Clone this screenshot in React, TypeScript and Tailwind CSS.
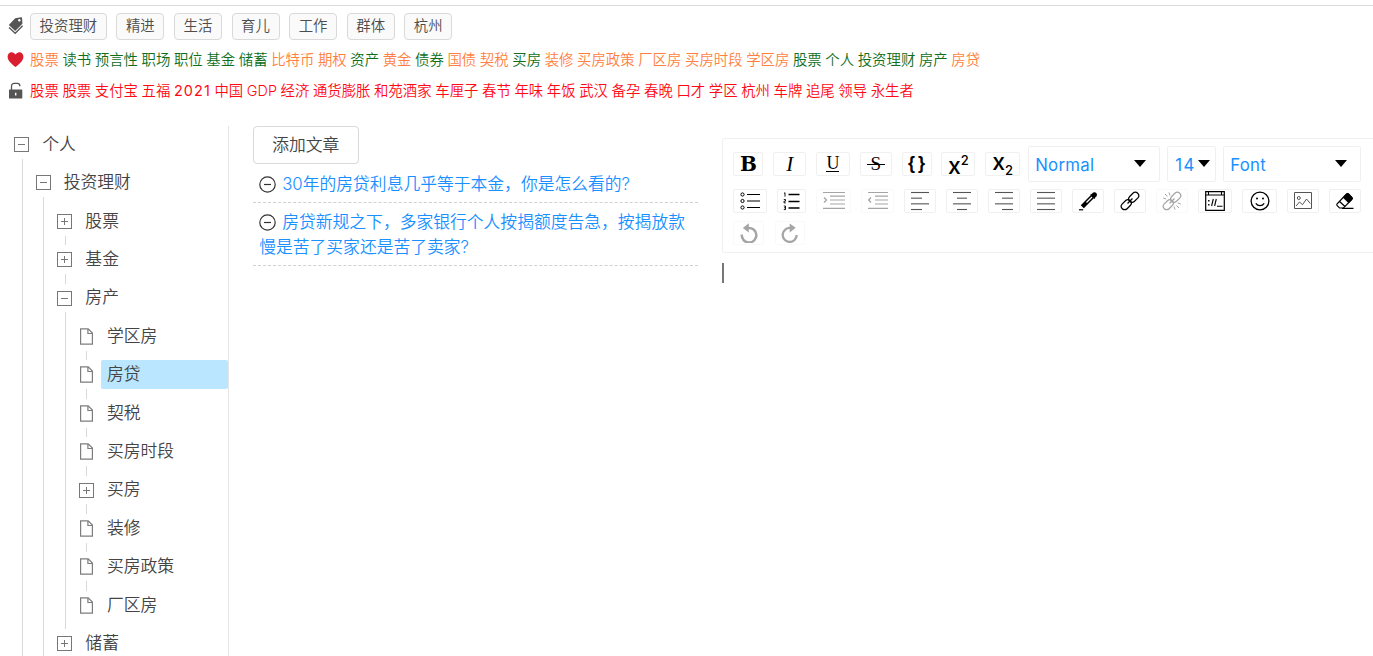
import type { ReactNode } from "react";

const categories = ["投资理财", "精进", "生活", "育儿", "工作", "群体", "杭州"];

// A leading "*" marks an orange keyword; the rest are green.
const favorites =
  "*股票 读书 预言性 职场 职位 基金 储蓄 *比特币 *期权 资产 *黄金 债券 *国债 *契税 买房 *装修 *买房政策 *厂区房 *买房时段 *学区房 股票 个人 投资理财 房产 *房贷".split(" ");

const hotWords =
  "股票 股票 支付宝 五福 2021 中国 GDP 经济 通货膨胀 和苑酒家 车厘子 春节 年味 年饭 武汉 备孕 春晚 口才 学区 杭州 车牌 追尾 领导 永生者".split(" ");

type Kind = "open" | "closed" | "leaf";
type Node = { label: string; level: number; kind: Kind; first?: boolean; last?: boolean; selected?: boolean };

const nodes: Node[] = [
  { label: "个人", level: 0, kind: "open", first: true },
  { label: "投资理财", level: 1, kind: "open", first: true },
  { label: "股票", level: 2, kind: "closed", first: true },
  { label: "基金", level: 2, kind: "closed" },
  { label: "房产", level: 2, kind: "open" },
  { label: "学区房", level: 3, kind: "leaf", first: true },
  { label: "房贷", level: 3, kind: "leaf", selected: true },
  { label: "契税", level: 3, kind: "leaf" },
  { label: "买房时段", level: 3, kind: "leaf" },
  { label: "买房", level: 3, kind: "closed" },
  { label: "装修", level: 3, kind: "leaf" },
  { label: "买房政策", level: 3, kind: "leaf" },
  { label: "厂区房", level: 3, kind: "leaf", last: true },
  { label: "储蓄", level: 2, kind: "closed" },
];

const articles = [
  "30年的房贷利息几乎等于本金，你是怎么看的?",
  "房贷新规之下，多家银行个人按揭额度告急，按揭放款慢是苦了买家还是苦了卖家?",
];

function NodeIcon({ kind }: { kind: Kind }) {
  if (kind === "leaf") {
    return (
      <svg className="block" width="15" height="17" viewBox="0 0 15 17" fill="none" stroke="#7d7d7d" strokeWidth="1.2">
        <path d="M1.6 .9h7.6l4.2 4.2v11H1.6zM8.9 .9v4.6h4.5" />
      </svg>
    );
  }
  return (
    <svg className="block" width="15" height="15" viewBox="0 0 15 15" fill="none" stroke="#777" strokeWidth="1">
      <rect x=".5" y=".5" width="14" height="14" />
      <path d={kind === "open" ? "M4 7.5h7" : "M4 7.5h7M7.5 4v7"} />
    </svg>
  );
}

function TreeRow({ node }: { node: Node }) {
  return (
    <li className="flex h-[38.4px]">
      {Array.from({ length: node.level }, (_, i) => (
        <span key={i} className="flex w-[21.6px] shrink-0 justify-center pl-[1px]">
          <span className="h-full w-px bg-[#d9d9d9]" />
        </span>
      ))}
      <span className="flex w-[21.6px] shrink-0 flex-col items-center justify-between">
        <span className={node.first ? "h-[4.8px] w-px" : "ml-[1px] h-[4.8px] w-px bg-[#d9d9d9]"} />
        <NodeIcon kind={node.kind} />
        <span className={node.last ? "h-[4.8px] w-px" : "ml-[1px] h-[4.8px] w-px bg-[#d9d9d9]"} />
      </span>
      <span
        className={`my-[4.8px] ml-[3.6px] flex flex-1 items-center rounded-[2px] pl-[6.2px] ${node.selected ? "bg-[#bae7ff]" : ""}`}
      >
        {node.label}
      </span>
    </li>
  );
}

function Lines({ rows, color = "#555" }: { rows: [number, number][]; color?: string }) {
  return (
    <>
      {rows.map(([x, w], i) => (
        <path key={i} d={`M${x} ${1.5 + i * 5.67}h${w}`} stroke={color} strokeWidth="1.1" />
      ))}
    </>
  );
}

function Tool({ width, disabled, children }: { width: string; disabled?: boolean; children: ReactNode }) {
  return (
    <button
      className={`flex h-6 shrink-0 items-center justify-center rounded-[2px] border border-[#f0f0f0] bg-white text-black ${width} ${disabled ? "opacity-35" : ""}`}
    >
      {children}
    </button>
  );
}

function Glyph({ children, w = 20 }: { children: ReactNode; w?: number }) {
  return (
    <svg width={w} height="20" viewBox={`0 0 ${w} 20`} fill="none" stroke="#000" className="block shrink-0">
      {children}
    </svg>
  );
}

function Arrow() {
  return (
    <svg width="12" height="7" viewBox="0 0 12 7" className="mb-[3px] block shrink-0">
      <path d="M0 0h12L6 7z" fill="#000" />
    </svg>
  );
}

function LinkShape() {
  return (
    <g transform="rotate(-45 10 10)" strokeWidth="1.2">
      <rect x="-.9" y="6.6" width="11.3" height="6.8" rx="3.4" />
      <rect x="9.6" y="6.6" width="11.3" height="6.8" rx="3.4" />
      <path d="M6.5 10h7" />
    </g>
  );
}

function Toolbar() {
  return (
    <div className="h-[115px] w-[660px] rounded-[2px] border border-[#f0f0f0] pl-[10.4px] pt-[7px]">
      <div className="flex h-9 items-center">
        <div className="flex gap-[9.8px] text-[21px] leading-none">
          <Tool width="w-[30px]">
            <span className="font-['DejaVu_Serif'] text-[20px] font-bold">B</span>
          </Tool>
          <Tool width="w-[33px]">
            <span className="font-['Liberation_Serif'] text-[21px] italic">I</span>
          </Tool>
          <Tool width="w-[34px]">
            <span className="border-b border-black font-['Liberation_Serif'] text-[18px] leading-[15px]">U</span>
          </Tool>
          <Tool width="w-[32px]">
            <span className="relative flex w-[18px] justify-center font-['Liberation_Serif'] text-[19px] leading-[20px]">
              S
              <span className="absolute left-0 top-[10px] h-px w-full bg-black" />
            </span>
          </Tool>
          <Tool width="w-[30px]">
            <span className="pb-[2px] pl-[3px] font-['Liberation_Sans'] text-[18px] font-bold tracking-[3px]">{"{}"}</span>
          </Tool>
          <Tool width="w-[34px]">
            <span className="flex items-start font-['Inter'] font-medium">
              <span className="pt-[3px] text-[23px] leading-[16px]">x</span>
              <span className="text-[13px] leading-[10px]">2</span>
            </span>
          </Tool>
          <Tool width="w-[35px]">
            <span className="flex items-end font-['Inter'] font-medium">
              <span className="pb-[5px] text-[23px] leading-[18px]">x</span>
              <span className="text-[13px] leading-[11px]">2</span>
            </span>
          </Tool>
        </div>
        <div className="ml-[8px] flex h-9 w-[132px] items-center justify-between rounded-[2px] border border-[#f0f0f0] pl-[6px] pr-[13px] pt-[1px] text-[16.8px] font-normal tracking-[0.3px] text-[#1890ff]">
          <span className="pt-[3px]">Normal</span>
          <Arrow />
        </div>
        <div className="ml-[7px] flex h-9 w-[49px] items-center justify-between rounded-[2px] border border-[#f0f0f0] pl-[7px] pr-[5px] pt-[1px] text-[16.8px] font-normal tracking-[1.5px] text-[#1890ff]">
          <span className="pt-[3px]">14</span>
          <Arrow />
        </div>
        <div className="ml-[7px] flex h-9 w-[138px] items-center justify-between rounded-[2px] border border-[#f0f0f0] pl-[6px] pr-[13px] pt-[1px] text-[16.8px] font-normal tracking-[0.3px] text-[#1890ff]">
          <span className="pt-[3px]">Font</span>
          <Arrow />
        </div>
      </div>

      <div className="mt-[7px] flex gap-[10px]">
        <Tool width="w-[34px]">
          <Glyph>
            <path d="M7 3.5h13M7 10h13M7 16.5h13" strokeWidth="1.2" />
            <circle cx="2.5" cy="3.5" r="1.6" />
            <circle cx="2.5" cy="10" r="1.6" />
            <circle cx="2.5" cy="16.5" r="1.6" />
          </Glyph>
        </Tool>
        <Tool width="w-[29px]">
          <Glyph w={17}>
            <path d="M5.5 3.5h11M5.5 10.5h11M5.5 17h11" strokeWidth="1.5" />
            <path d="M1 2.5l1-.8v4M.8 8.5h1.7v1.7H1v1.7h1.8M.8 15h1.7v3.6H.8M1 16.8h1.5" strokeWidth=".9" />
          </Glyph>
        </Tool>
        <Tool width="w-[35px]" disabled>
          <Glyph w={22}>
            <path d="M0 1.5h22M7 5.2h15M7 9h15M7 13h15M0 17.3h22" strokeWidth="1.2" />
            <path d="M1 6.5L3.5 9 1 11.5" strokeWidth="1.3" />
          </Glyph>
        </Tool>
        <Tool width="w-[33px]" disabled>
          <Glyph>
            <path d="M0 1.5h20M7 5.2h13M7 9h13M7 13h13M0 17.3h20" strokeWidth="1.2" />
            <path d="M3 6.5L.7 9 3 11.5" strokeWidth="1.3" />
          </Glyph>
        </Tool>
        <Tool width="w-[32px]">
          <Glyph w={18}><Lines rows={[[0, 18], [0, 11], [0, 18], [0, 11]]} /></Glyph>
        </Tool>
        <Tool width="w-[32px]">
          <Glyph w={18}><Lines rows={[[0, 18], [4, 10], [0, 18], [4, 10]]} /></Glyph>
        </Tool>
        <Tool width="w-[32px]">
          <Glyph w={18}><Lines rows={[[0, 18], [7, 11], [0, 18], [7, 11]]} /></Glyph>
        </Tool>
        <Tool width="w-[32px]">
          <Glyph w={18}><Lines rows={[[0, 18], [0, 18], [0, 18], [0, 18]]} /></Glyph>
        </Tool>
        <Tool width="w-[32px]">
          <Glyph>
            <path d="M4.3 15.7L14.5 5.5" strokeWidth="4.4" />
            <path d="M8.5 11.5L14 6" stroke="#fff" strokeWidth="1.3" />
            <path d="M12.8 3.2l4.2 4.2" strokeWidth="1.6" />
            <circle cx="16.4" cy="3.8" r="2.5" fill="#000" stroke="none" />
            <path d="M1 18.8h4.2" strokeWidth="1.2" />
          </Glyph>
        </Tool>
        <Tool width="w-[32px]">
          <Glyph><LinkShape /></Glyph>
        </Tool>
        <Tool width="w-[32px]" disabled>
          <Glyph>
            <LinkShape />
            <path d="M7 1.5l1 3M3 3l2.5 2.5M1.2 7l3 1M13 18.5l-1-3M17 17l-2.5-2.5M18.8 13l-3-1" />
          </Glyph>
        </Tool>
        <Tool width="w-[34px]">
          <Glyph>
            <path d="M.7 .7h18.6v18.6H.7zM.7 4h18.6" strokeWidth="1.2" />
            <path d="M3.5 .7V4M16.5 .7V4M8.3 8L6.6 15M11.3 8L9.6 15M12 15.2h5.5" strokeWidth="1.1" />
            <path d="M3.8 9v1.6M3.8 13v1.6" strokeWidth="1.4" />
          </Glyph>
        </Tool>
        <Tool width="w-[35px]">
          <Glyph>
            <circle cx="10" cy="10" r="8.9" strokeWidth="1.3" />
            <path d="M5.8 12.3c2 3 6.4 3 8.4 0" strokeWidth="1.2" />
            <circle cx="7" cy="7.4" r="1" fill="#000" stroke="none" />
            <circle cx="13" cy="7.4" r="1" fill="#000" stroke="none" />
          </Glyph>
        </Tool>
        <Tool width="w-[32px]">
          <Glyph w={18}>
            <g stroke="#555">
              <path d="M.5 1.5h17v16H.5z" />
              <circle cx="4.8" cy="7" r="1.5" />
              <path d="M2 15l3.5-4 3 2.7L12.5 8l3.8 4.5" />
            </g>
          </Glyph>
        </Tool>
        <Tool width="w-[32px]">
          <Glyph>
            <path d="M2 13L11.5 3q1-.9 2.2 0L17 6.5q.8 1-.2 2L8.5 17H4.5L2 14.5q-.6-.8 0-1.5z" strokeWidth="1.1" />
            <path d="M8.2 6.5l3.5-3.7q.9-.7 1.8 0L17 6.4q.8.9 0 1.8l-3.3 3.6z" fill="#000" />
            <path d="M4.5 10.5l5.5 5M7 17.4h11.5" strokeWidth="1.2" />
          </Glyph>
        </Tool>
      </div>

      <div className="mt-[8px] flex gap-[11px]">
        <Tool width="w-[31px]" disabled>
          <Glyph>
            <path d="M2.8 11.5A7.3 7.3 0 1 0 9 5" strokeWidth="2.5" />
            <path d="M9.8 .3v9.2L3.8 5z" fill="#000" stroke="none" />
          </Glyph>
        </Tool>
        <Tool width="w-[30px]" disabled>
          <Glyph>
            <path d="M16.7 12A7 7 0 1 1 10.5 5" strokeWidth="2.3" />
            <path d="M9.7 .5v9l6-4.7z" fill="#000" stroke="none" />
          </Glyph>
        </Tool>
      </div>
    </div>
  );
}

export default function App() {
  return (
    <div className="flex h-[656px] w-full flex-col overflow-hidden bg-white pt-[5px] font-['Inter','Noto_Sans_CJK_SC',sans-serif] font-[350] text-[#444]">
      <div className="h-px shrink-0 bg-[#d9d9d9]" />
      <header className="flex h-[119px] shrink-0 flex-col pl-[7px] text-[14.4px]">
        <div className="mt-[7px] flex h-[27px] items-center">
          <svg width="17" height="19" viewBox="0 0 17 19" className="mb-[2px] mr-[6px] shrink-0" fill="#555">
            <path d="M8.2 2.2L14 1.3q1-.1 1.1.9l.3 5.6L8.2 15 1.8 9z" />
            <path d="M2 11.5l6.2 5.8 7.4-7.5" fill="none" stroke="#555" strokeWidth="1.3" />
            <circle cx="12.3" cy="4.3" r="1.2" fill="#fff" />
          </svg>
          <div className="flex gap-[9.6px]">
            {categories.map((c) => (
              <span
                key={c}
                className="flex h-[26.4px] items-center rounded-[4px] border border-[#d9d9d9] bg-[#fafafa] px-[8.6px] pb-[1px] text-[#4d4d4d]"
              >
                {c}
              </span>
            ))}
          </div>
        </div>
        <div className="mt-[5px] flex h-[30px] items-center">
          <svg width="17" height="17" viewBox="0 0 17 17" className="mb-[2px] mr-[6px] shrink-0" fill="#d81e2f">
            <path d="M8.5 16C6 13.8.6 10.5.6 5.7.6 3 2.4 1.2 4.6 1.2c1.7 0 3.1.9 3.9 2.4.8-1.5 2.2-2.4 3.9-2.4 2.2 0 4 1.8 4 4.5 0 4.8-5.4 8.1-7.9 10.3z" />
          </svg>
          <div className="flex gap-[3.6px] whitespace-nowrap">
            {favorites.map((w, i) => (
              <span key={i} className={w.startsWith("*") ? "text-[#ff7f42]" : "text-[#0f6e1a]"}>
                {w.replace("*", "")}
              </span>
            ))}
          </div>
        </div>
        <div className="mt-[1px] flex h-[30px] items-center">
          <svg width="17" height="18" viewBox="0 0 17 18" className="mb-[1px] mr-[6px] shrink-0">
            <path d="M4.5 8.5V4.2q0-2.8 2.8-2.8h3q2.6 0 2.6 2.8" fill="none" stroke="#555" strokeWidth="1.3" />
            <rect x="2" y="7.5" width="13.3" height="9" rx=".6" fill="#555" />
            <path d="M8.7 10.7v2.8" stroke="#fff" strokeWidth="1.4" />
          </svg>
          <div className="flex gap-[3.6px] whitespace-nowrap text-[#ff0a14]">
            {hotWords.map((w, i) => (
              <span key={i} className={w === "2021" ? "font-normal tracking-[1.1px]" : ""}>
                {w}
              </span>
            ))}
          </div>
        </div>
      </header>

      <main className="flex min-h-0 flex-1 text-[16.8px]">
        <aside className="mt-[1px] w-[229px] shrink-0 border-r border-[#e4e4e4] pl-[10.8px]">
          <ul className="-mt-[0.7px]">
            {nodes.map((n, i) => (
              <TreeRow key={i} node={n} />
            ))}
          </ul>
        </aside>

        <section className="ml-6 mt-[1px] w-[445px] shrink-0">
          <button className="flex h-[38.4px] w-[105.6px] items-center justify-center rounded-[4px] border border-[#d9d9d9] bg-white font-[350] text-[#444]">
            添加文章
          </button>
          {articles.map((a) => (
            <div key={a} className="border-b border-dashed border-[#d0d0d0] px-[6.2px] pb-[4.7px] pt-[7.3px] leading-[25.2px]">
              <svg
                className="mr-[6px] inline-block align-[-3px]"
                width="17"
                height="17"
                viewBox="0 0 17 17"
                fill="none"
                stroke="#333"
                strokeWidth="1.2"
              >
                <circle cx="8.5" cy="8.5" r="7.7" />
                <path d="M5 8.5h7" />
              </svg>
              <a className="text-[#1890ff]">{a}</a>
            </div>
          ))}
        </section>

        <section className="ml-[24px] mt-[13px] min-w-0 flex-1 overflow-hidden">
          <Toolbar />
          <div className="mt-[10px] h-5 w-[1.5px] bg-[#777]" />
        </section>
      </main>
    </div>
  );
}
